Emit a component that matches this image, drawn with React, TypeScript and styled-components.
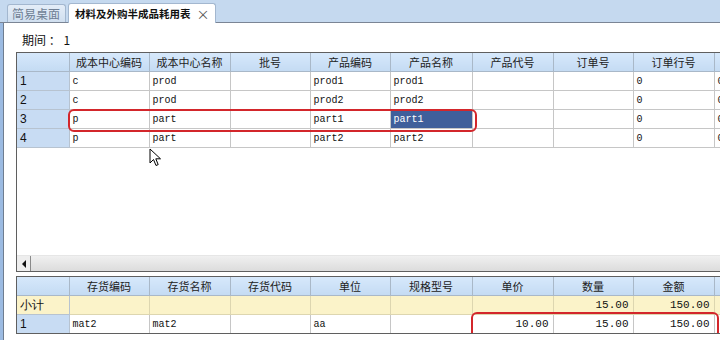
import React from "react";
import styled, { createGlobalStyle } from "styled-components";

const GlobalStyle = createGlobalStyle`
  html, body {
    margin: 0;
    padding: 0;
    background: #ffffff;
  }
  body {
    width: 720px;
    height: 340px;
    overflow: hidden;
    font-family: "Noto Sans CJK SC", "Liberation Sans", sans-serif;
  }
`;

const COLS = [52, 80, 81, 80, 80, 82, 81, 80, 81, 80];

const topHeads = ["成本中心编码", "成本中心名称", "批号", "产品编码", "产品名称", "产品代号", "订单号", "订单行号", "订单"];
const topRows = [
  ["1", "c", "prod", "", "prod1", "prod1", "", "", "0", "0"],
  ["2", "c", "prod", "", "prod2", "prod2", "", "", "0", "0"],
  ["3", "p", "part", "", "part1", "part1", "", "", "0", "0"],
  ["4", "p", "part", "", "part2", "part2", "", "", "0", "0"],
];

const bottomHeads = ["存货编码", "存货名称", "存货代码", "单位", "规格型号", "单价", "数量", "金额", ""];

const App = () => {
  return (
    <>
      <GlobalStyle />
      <Page>
        <TabBar>
          <Tab>简易桌面</Tab>
          <Tab $active>
            材料及外购半成品耗用表
            <Close>×</Close>
          </Tab>
        </TabBar>
        <Body>
          <SideStripe />
          <Content>
            <Period>期间 ： 1</Period>
            <TopGrid>
              <Table>
                <Cols />
                <thead>
                  <tr>
                    <HeadCell />
                    {topHeads.map((h, i) => (
                      <HeadCell key={i}>{h}</HeadCell>
                    ))}
                  </tr>
                </thead>
                <tbody>
                  {topRows.map((r) => (
                    <tr key={r[0]}>
                      <RowHead>{r[0]}</RowHead>
                      {r.slice(1).map((v, i) => (
                        <DataCell key={i} $selected={r[0] === "3" && i === 4}>
                          {v}
                        </DataCell>
                      ))}
                    </tr>
                  ))}
                </tbody>
              </Table>
              <Filler />
              <HScroll>
                <ScrollBtn>
                  <svg width="6" height="8" viewBox="0 0 6 8">
                    <path d="M5 0 L1 4 L5 8 Z" fill="#111" />
                  </svg>
                </ScrollBtn>
              </HScroll>
              <Mark style={{ left: 51, top: 56, width: 405, height: 19 }} />
              <Cursor width="13" height="19" viewBox="0 0 13 19">
                <path d="M1 1 L1 15 L4.5 11.5 L7 17.5 L9.2 16.6 L6.8 10.8 L11.5 10.8 Z" fill="#fff" stroke="#000" strokeWidth="1" strokeLinejoin="round" />
              </Cursor>
            </TopGrid>
            <BottomGrid>
              <Table>
                <Cols />
                <thead>
                  <tr>
                    <HeadCell />
                    {bottomHeads.map((h, i) => (
                      <HeadCell key={i}>{h}</HeadCell>
                    ))}
                  </tr>
                </thead>
                <tbody>
                  <tr>
                    <SumHead>小计</SumHead>
                    {bottomHeads.map((_, i) => (
                      <SumCell key={i}>{i === 6 ? "15.00" : i === 7 ? "150.00" : ""}</SumCell>
                    ))}
                  </tr>
                  <tr>
                    <RowHead>1</RowHead>
                    <DataCell>mat2</DataCell>
                    <DataCell>mat2</DataCell>
                    <DataCell />
                    <DataCell>aa</DataCell>
                    <DataCell />
                    <NumCell>10.00</NumCell>
                    <NumCell>15.00</NumCell>
                    <NumCell>150.00</NumCell>
                    <DataCell />
                  </tr>
                </tbody>
              </Table>
              <Mark style={{ left: 454, top: 35, width: 244, height: 22 }} />
            </BottomGrid>
          </Content>
        </Body>
      </Page>
    </>
  );
};

export default App;

const Cols = () => (
  <colgroup>
    {COLS.map((w, i) => (
      <col key={i} style={{ width: w }} />
    ))}
  </colgroup>
);

const Page = styled.div`
  width: 720px;
  height: 340px;
  display: flex;
  flex-direction: column;
  overflow: hidden;
`;

const TabBar = styled.div`
  height: 22px;
  flex: none;
  display: flex;
  align-items: flex-end;
  gap: 2px;
  padding-left: 7px;
  background: #c5d9ef;
  border-bottom: 1px solid #7b8595;
`;

const Tab = styled.div<{ $active?: boolean }>`
  height: ${(p) => (p.$active ? 19 : 17)}px;
  display: flex;
  align-items: center;
  gap: 6px;
  padding: 0 ${(p) => (p.$active ? 5 : 5)}px 0 ${(p) => (p.$active ? 6 : 4)}px;
  margin-bottom: ${(p) => (p.$active ? -1 : 0)}px;
  font-size: ${(p) => (p.$active ? 10.5 : 12)}px;
  font-weight: ${(p) => (p.$active ? 700 : 400)};
  color: ${(p) => (p.$active ? "#111" : "#6f7f94")};
  background: ${(p) => (p.$active ? "#ffffff" : "linear-gradient(#e4edf8, #d0dfef)")};
  border: 1px solid #a3b7cf;
  border-bottom: none;
  border-radius: 3px 3px 0 0;
`;

const Close = styled.span`
  font-weight: 400;
  font-size: 13px;
  color: #555;
`;

const Body = styled.div`
  flex: 1;
  display: flex;
  min-height: 0;
`;

const SideStripe = styled.div`
  width: 3px;
  flex: none;
  background: #9cbbe2;
  border-right: 1px solid #6f7d90;
`;

const Content = styled.div`
  flex: 1;
  display: flex;
  flex-direction: column;
  padding-left: 12px;
  background: #fff;
  min-width: 0;
`;

const Period = styled.div`
  height: 29px;
  flex: none;
  display: flex;
  align-items: center;
  padding-left: 6px;
  padding-top: 3px;
  box-sizing: border-box;
  font-size: 12px;
  color: #111;
`;

const TopGrid = styled.div`
  position: relative;
  height: 220px;
  flex: none;
  display: flex;
  flex-direction: column;
  border: 1px solid #5f5f5f;
  border-right: none;
  box-sizing: border-box;
  overflow: hidden;
`;

const BottomGrid = styled.div`
  position: relative;
  margin-top: 4px;
  height: 58px;
  flex: none;
  border: 1px solid #5f5f5f;
  border-right: none;
  box-sizing: border-box;
  overflow: hidden;
`;

const Table = styled.table`
  table-layout: fixed;
  border-collapse: collapse;
  width: 777px;
  flex: none;
`;

const HeadCell = styled.th`
  height: 18px;
  padding: 0 4px;
  font-size: 11px;
  font-weight: 400;
  color: #222;
  text-align: center;
  white-space: nowrap;
  overflow: hidden;
  background: linear-gradient(#d6e8fb, #c4dbf3);
  border: 1px solid #a9b8c8;
  border-top: none;
  &:first-child {
    border-left: none;
  }
`;

const RowHead = styled.td`
  height: 18px;
  padding: 0 3px;
  font-size: 12px;
  color: #111;
  background: #c8dcf3;
  border: 1px solid #b7c3d0;
  border-left: none;
  font-family: "Liberation Sans", sans-serif;
`;

const DataCell = styled.td<{ $selected?: boolean }>`
  height: 18px;
  padding: 0 3px;
  font-family: "Liberation Mono", "Noto Sans CJK SC", monospace;
  font-size: 10px;
  color: ${(p) => (p.$selected ? "#fff" : "#111")};
  background: ${(p) => (p.$selected ? "#3f5f9b" : "#fff")};
  border: 1px solid #c6c6c6;
  white-space: nowrap;
  overflow: hidden;
`;

const NumCell = styled(DataCell)`
  text-align: right;
  padding-right: 4px;
  font-size: 11px;
`;

const SumHead = styled(RowHead)`
  background: #fbf3c9;
`;

const SumCell = styled.td`
  height: 17px;
  padding: 0 4px;
  font-family: "Liberation Mono", monospace;
  font-size: 11px;
  color: #111;
  text-align: right;
  background: #fbf3c9;
  border: 1px solid #ddd6b0;
`;

const Filler = styled.div`
  flex: 1;
  background: #fff;
`;

const HScroll = styled.div`
  height: 15px;
  flex: none;
  display: flex;
  background: linear-gradient(#f0f0f0, #dcdcdc);
  border-top: 1px solid #e6e6e6;
`;

const ScrollBtn = styled.div`
  width: 13px;
  display: flex;
  align-items: center;
  justify-content: center;
  background: #eeeeee;
  border-right: 1px solid #8a8a8a;
`;

const Mark = styled.div`
  position: absolute;
  border: 2px solid #d3262b;
  border-radius: 6px;
  pointer-events: none;
`;

const Cursor = styled.svg`
  position: absolute;
  left: 132px;
  top: 95px;
`;
